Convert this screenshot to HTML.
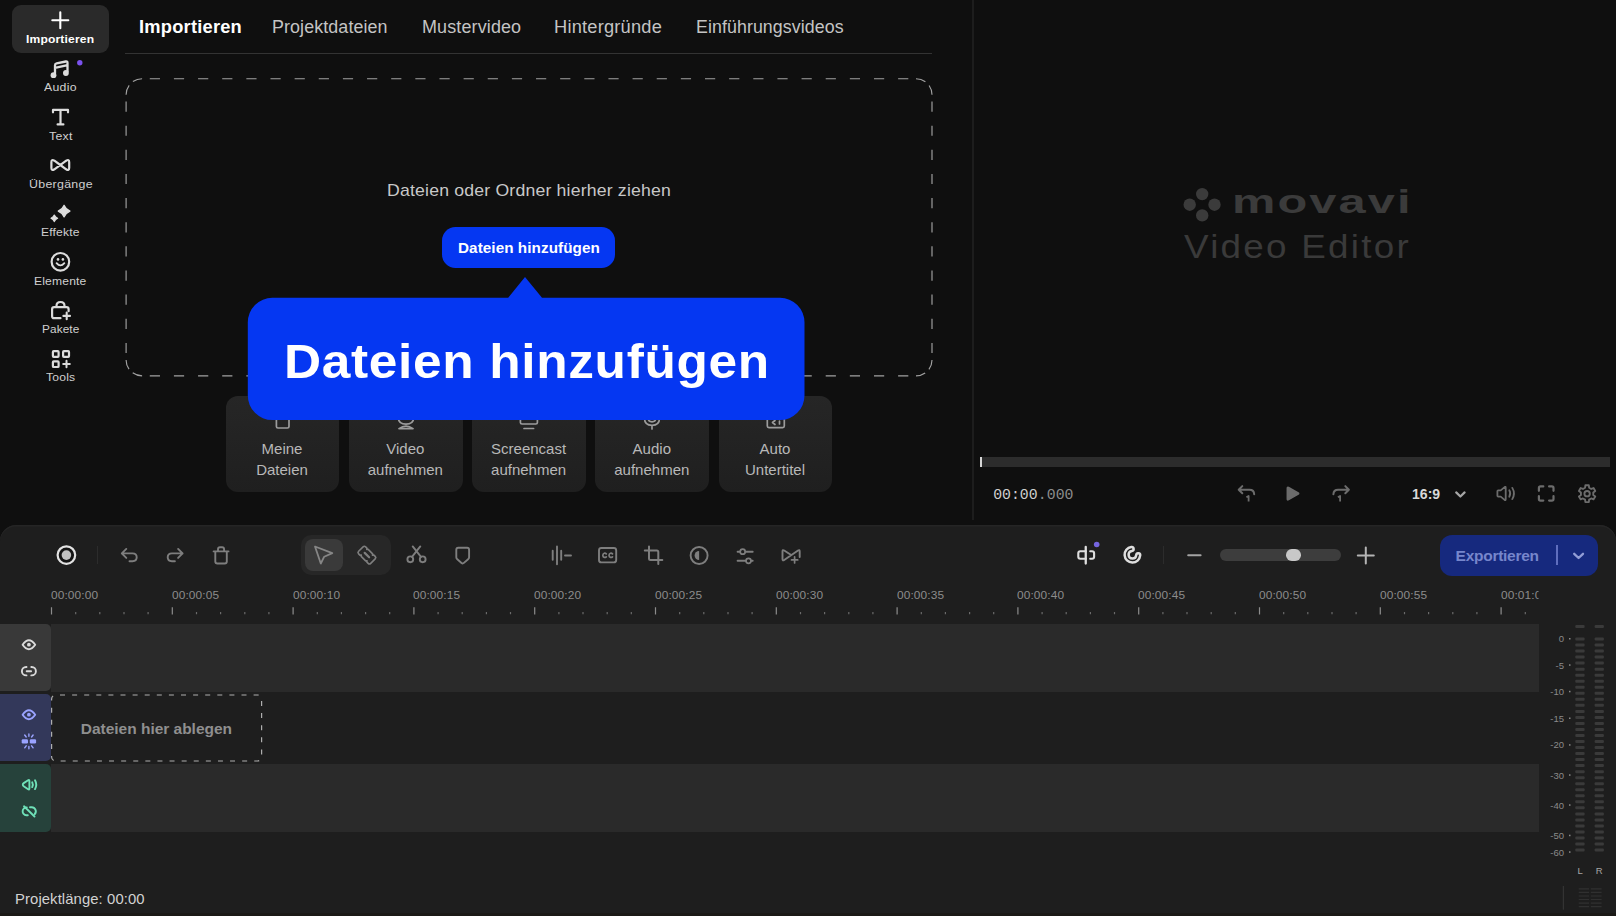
<!DOCTYPE html>
<html lang="de">
<head>
<meta charset="utf-8">
<title>Movavi Video Editor – Dateien hinzufügen</title>
<style>
html,body{margin:0;padding:0;}
body{width:1616px;height:916px;overflow:hidden;background:#0f0f0f;position:relative;font-family:"Liberation Sans",sans-serif;}
.a{position:absolute;}
.t{position:absolute;white-space:pre;}
svg{position:absolute;overflow:visible;}
.card{position:absolute;top:396.2px;height:96.3px;width:113.8px;background:linear-gradient(#262626,#1f1f1f);border-radius:12px;}
.card div{position:absolute;left:0;width:113px;text-align:center;font:400 15px/1 "Liberation Sans",sans-serif;color:#b8b8b8;white-space:pre;}
.vu{position:absolute;font:400 9.5px/1 "Liberation Sans",sans-serif;color:#8a8a8a;text-align:right;width:30px;left:1534px;}
</style>
</head>
<body>
<!-- sidebar -->
<div class="a" style="left:12px;top:4.5px;width:97px;height:48px;background:#2a2a2a;border-radius:9px;"></div>
<svg id="icons-side" width="120" height="400" viewBox="0 0 120 400" style="left:0;top:0" fill="none" stroke="#dcdcdc" stroke-width="2.1" stroke-linecap="round" stroke-linejoin="round">
  <!-- plus -->
  <path d="M52.3 20.3h16M60.3 12.3v16" stroke="#fff" stroke-width="2.1"/>
  <!-- audio note -->
  <path stroke-width="2.3" d="M55 73.5V65.3q0 -1.6 1.6 -1.9l9.2 -1.9q1.7 -.3 1.7 1.4V71.5M55 67.8l12.5 -2.6"/>
  <circle cx="53.5" cy="75.2" r="2.9" fill="#dcdcdc" stroke="none"/><circle cx="65.9" cy="73" r="2.9" fill="#dcdcdc" stroke="none"/>
  <circle cx="79.8" cy="62.7" r="2.7" fill="#7b52ee" stroke="none"/>
  <!-- T -->
  <path d="M53 112.3v-2.4h15v2.4M60.5 110v14.3M57.6 124.4h5.8" stroke-width="2.2"/>
  <!-- transitions bowtie -->
  <path d="M60.3 165L54.4 160.7Q51.4 158.8 51.4 162.2V167.8Q51.4 171.2 54.4 169.3L66.2 160.7Q69.2 158.8 69.2 162.2V167.8Q69.2 171.2 66.2 169.3Z" stroke-width="2.2"/>
  <!-- effects sparkles -->
  <g fill="#dcdcdc" stroke="#dcdcdc" stroke-width="1.2">
    <path d="M64.1 205.2Q65.8 209.4 70 211.1Q65.8 212.8 64.1 217Q62.4 212.8 58.2 211.1Q62.4 209.4 64.1 205.2Z"/>
    <path d="M54.3 215Q55.3 217.3 57.6 218.3Q55.3 219.3 54.3 221.6Q53.3 219.3 51 218.3Q53.3 217.3 54.3 215Z"/>
  </g>
  <!-- elements smiley -->
  <circle cx="60.4" cy="261.8" r="8.8" stroke-width="2.2"/>
  <circle cx="58" cy="259.4" r="1.3" fill="#dcdcdc" stroke="none"/><circle cx="62.9" cy="259.4" r="1.3" fill="#dcdcdc" stroke="none"/>
  <path d="M56.6 263.2q3.8 4.4 7.7 0" stroke-width="1.9"/>
  <!-- packages bag -->
  <path d="M60.5 318.2h-6.4q-2 0 -2 -2v-7q0 -2 2 -2h12.5q2 0 2 2v2" stroke-width="2.2"/>
  <path d="M56.5 306.5v-.6q0 -3.9 4 -3.9t4 3.9v.6" stroke-width="2.2"/>
  <path d="M66.7 312.6v6.6M63.4 315.9h6.6" stroke-width="2.1"/>
  <!-- tools grid -->
  <g stroke-width="2.2">
    <rect x="52.9" y="351.1" width="5.7" height="5.7" rx=".8"/>
    <rect x="63.1" y="351.1" width="5.9" height="5.7" rx=".8"/>
    <rect x="52.9" y="361.4" width="5.7" height="5.6" rx=".8"/>
    <path d="M66.5 360.7v6.6M63.2 364h6.6" stroke-width="2"/>
  </g>
</svg>
<!-- import panel -->
<div class="a" style="left:125px;top:53px;width:807px;height:1px;background:#333333;"></div>
<svg width="1000" height="400" style="left:0;top:0" viewBox="0 0 1000 400"><path d="M511.88 78.7h10.2M511.88 375.9h10.2M536.02 78.7h10.2M536.02 375.9h10.2M487.74 78.7h10.2M487.74 375.9h10.2M560.16 78.7h10.2M560.16 375.9h10.2M463.60 78.7h10.2M463.60 375.9h10.2M584.30 78.7h10.2M584.30 375.9h10.2M439.46 78.7h10.2M439.46 375.9h10.2M608.44 78.7h10.2M608.44 375.9h10.2M415.32 78.7h10.2M415.32 375.9h10.2M632.58 78.7h10.2M632.58 375.9h10.2M391.18 78.7h10.2M391.18 375.9h10.2M656.72 78.7h10.2M656.72 375.9h10.2M367.04 78.7h10.2M367.04 375.9h10.2M680.86 78.7h10.2M680.86 375.9h10.2M342.90 78.7h10.2M342.90 375.9h10.2M705.00 78.7h10.2M705.00 375.9h10.2M318.76 78.7h10.2M318.76 375.9h10.2M729.14 78.7h10.2M729.14 375.9h10.2M294.62 78.7h10.2M294.62 375.9h10.2M753.28 78.7h10.2M753.28 375.9h10.2M270.48 78.7h10.2M270.48 375.9h10.2M777.42 78.7h10.2M777.42 375.9h10.2M246.34 78.7h10.2M246.34 375.9h10.2M801.56 78.7h10.2M801.56 375.9h10.2M222.20 78.7h10.2M222.20 375.9h10.2M825.70 78.7h10.2M825.70 375.9h10.2M198.06 78.7h10.2M198.06 375.9h10.2M849.84 78.7h10.2M849.84 375.9h10.2M173.92 78.7h10.2M173.92 375.9h10.2M873.98 78.7h10.2M873.98 375.9h10.2M149.78 78.7h10.2M149.78 375.9h10.2M898.12 78.7h10.2M898.12 375.9h10.2M126.1 222.20v10.2M932.0 222.20v10.2M126.1 198.06v10.2M932.0 198.06v10.2M126.1 246.34v10.2M932.0 246.34v10.2M126.1 173.92v10.2M932.0 173.92v10.2M126.1 270.48v10.2M932.0 270.48v10.2M126.1 149.78v10.2M932.0 149.78v10.2M126.1 294.62v10.2M932.0 294.62v10.2M126.1 125.64v10.2M932.0 125.64v10.2M126.1 318.76v10.2M932.0 318.76v10.2M126.1 101.50v10.2M932.0 101.50v10.2M126.1 342.90v10.2M932.0 342.90v10.2M126.10 94.70A16.0 16.0 0 0 1 129.16 85.30M132.92 81.59A16.0 16.0 0 0 1 142.10 78.70M916.00 78.70A16.0 16.0 0 0 1 925.40 81.76M929.11 85.52A16.0 16.0 0 0 1 932.00 94.70M932.00 359.90A16.0 16.0 0 0 1 928.94 369.30M925.18 373.01A16.0 16.0 0 0 1 916.00 375.90M142.10 375.90A16.0 16.0 0 0 1 132.70 372.84M128.99 369.08A16.0 16.0 0 0 1 126.10 359.90" fill="none" stroke="#a2a2a2" stroke-width="1.15"/></svg>
<div class="a" style="left:442.2px;top:226.6px;width:172.6px;height:41.2px;border-radius:13.5px;background:#0537f2;"></div>
<!-- quick action cards -->
<div class="card" style="left:225.5px"><div style="top:44.5px">Meine</div><div style="top:65.5px">Dateien</div></div>
<div class="card" style="left:348.8px"><div style="top:44.5px">Video</div><div style="top:65.5px">aufnehmen</div></div>
<div class="card" style="left:472.1px"><div style="top:44.5px">Screencast</div><div style="top:65.5px">aufnehmen</div></div>
<div class="card" style="left:595.3px"><div style="top:44.5px">Audio</div><div style="top:65.5px">aufnehmen</div></div>
<div class="card" style="left:718.5px"><div style="top:44.5px">Auto</div><div style="top:65.5px">Untertitel</div></div>
<svg width="1000" height="440" style="left:0;top:0" viewBox="0 0 1000 440" fill="none" stroke="#9c9c9c" stroke-width="1.7" stroke-linecap="round" stroke-linejoin="round">
  <path d="M276.4 418v8.4q0 1.6 1.6 1.6h9.4q1.6 0 1.6 -1.6V418"/>
  <path d="M398.3 418q.3 6.2 7.7 6.2t7.7 -6.2M399 428.6q7 -5 14 0M399 428.6h14"/>
  <path d="M520.4 418v4.4q0 1.6 1.6 1.6h13.8q1.6 0 1.6 -1.6V418M524 428.5h9.6"/>
  <path d="M644.5 418q0 7.3 7.5 7.3t7.5 -7.3M648.2 418q0 3.8 3.8 3.8t3.8 -3.8M652 425.5v3.5"/>
  <path d="M767.3 418v8q0 1.6 1.6 1.6h13.8q1.6 0 1.6 -1.6V418M775 420.5l-2.5 2l2.5 2M779.5 421v3"/>
</svg>
<!-- tooltip -->
<svg width="1000" height="440" style="left:0;top:0" viewBox="0 0 1000 440">
  <path d="M272.3 297.8H508.2L525 277L542 297.8H780.0a24.5 24.5 0 0 1 24.5 24.5V395.5a24.5 24.5 0 0 1 -24.5 24.5H272.3a24.5 24.5 0 0 1 -24.5 -24.5V322.3a24.5 24.5 0 0 1 24.5 -24.5Z" fill="#0537f2"/>
</svg>
<!-- preview -->
<div class="a" style="left:972.1px;top:0;width:1.9px;height:520px;background:#1d1d1d;"></div>
<svg width="60" height="60" style="left:1170px;top:170px" viewBox="1170 170 60 60" fill="#3b3b3b">
  <circle cx="1202.2" cy="194.1" r="6.2"/><circle cx="1189.7" cy="204.7" r="6.2"/><circle cx="1214.5" cy="204.7" r="6.2"/><circle cx="1202.2" cy="215.4" r="6.2"/>
</svg>
<div class="a" style="left:980.2px;top:457.1px;width:630px;height:10px;background:#2c2c2c;"></div>
<div class="a" style="left:980.2px;top:457.1px;width:1.7px;height:10px;background:#d6d6d6;"></div>
<svg width="1616" height="530" style="left:0;top:0" viewBox="0 0 1616 530" fill="none" stroke="#6c6c6c" stroke-width="2" stroke-linecap="round" stroke-linejoin="round">
  <!-- step back -->
  <path d="M1242.3 486.1L1238.7 489.7L1242.3 493.3M1238.7 489.7H1249.5q4.5 0 4.7 4.5"/>
  <path d="M1246.4 497.3l2.2 -1.3v5.6" stroke-width="1.8" stroke-linecap="butt"/>
  <!-- play -->
  <path d="M1287.3 488.2v10.8q0 1.3 1.2 .7l9.7 -5.5q1 -.6 0 -1.2l-9.7 -5.5q-1.2 -.6 -1.2 .7z" fill="#6c6c6c" stroke-width="1.5"/>
  <!-- step fwd -->
  <path d="M1345.3 486.1L1348.9 489.7L1345.3 493.3M1348.9 489.7H1338.1q-4.5 0 -4.7 4.5"/>
  <path d="M1337.9 497.3l2.2 -1.3v5.6" stroke-width="1.8" stroke-linecap="butt"/>
  <!-- chevron -->
  <path d="M1456.2 492.4l4.2 4.1l4.2 -4.1" stroke="#a6a6a6" stroke-width="2.2"/>
  <!-- volume -->
  <path d="M1497.4 491.2q0 -.8 .8 -.8h2.5l3.9 -3.3q1.1 -.8 1.1 .6v11.6q0 1.4 -1.1 .6l-3.9 -3.3h-2.5q-.8 0 -.8 -.8z" stroke-width="1.8"/>
  <path d="M1509.3 490.3q1.9 3.2 0 6.4M1512.3 487.9q3.3 5.6 0 11.2" stroke-width="1.8"/>
  <!-- fullscreen -->
  <path d="M1538.9 490.8v-2.8q0 -1.6 1.6 -1.6h2.8M1549.1 486.4h2.8q1.6 0 1.6 1.6v2.8M1553.5 496.2v2.8q0 1.6 -1.6 1.6h-2.8M1543.3 500.6h-2.8q-1.6 0 -1.6 -1.6v-2.8" stroke-width="2.2"/>
  <!-- gear -->
  <path d="M1585.06 487.74L1585.39 485.27L1588.81 485.27L1589.14 487.74L1591.24 488.95L1593.55 488.01L1595.25 490.97L1593.28 492.49L1593.28 494.91L1595.25 496.43L1593.55 499.39L1591.24 498.45L1589.14 499.66L1588.81 502.13L1585.39 502.13L1585.06 499.66L1582.96 498.45L1580.65 499.39L1578.95 496.43L1580.92 494.91L1580.92 492.49L1578.95 490.97L1580.65 488.01L1582.96 488.95Z" stroke-width="1.9"/><circle cx="1587.1" cy="493.7" r="2.7" stroke-width="1.9"/>
</svg>
<!-- timeline -->
<div class="a" style="left:0;top:525.3px;width:1616px;height:391px;background:#1e1e1e;border-radius:16px 16px 0 0;box-shadow:inset 0 1.6px 0 #252525;"></div>
<div class="a" style="left:51px;top:624px;width:1488px;height:67.6px;background:#2a2a2a;"></div>
<div class="a" style="left:51px;top:764px;width:1488px;height:67.8px;background:#2a2a2a;"></div>
<div class="a" style="left:0;top:623.9px;width:50.7px;height:66.9px;background:#393939;border-radius:0 5px 5px 0;"></div>
<div class="a" style="left:0;top:693.9px;width:50.7px;height:67.3px;background:#33385a;border-radius:0 5px 5px 0;"></div>
<div class="a" style="left:0;top:763.9px;width:50.7px;height:68px;background:#26423b;border-radius:0 5px 5px 0;"></div>
<svg width="300" height="100" style="left:0;top:680px" viewBox="0 680 300 100"><rect x="51.6" y="695" width="210" height="66" rx="4" fill="none" stroke="#aeaeae" stroke-width="1.2" stroke-dasharray="5 7.1" stroke-dashoffset="-4.4"/></svg>
<svg width="1616" height="20" style="left:0;top:600px" viewBox="0 0 1616 20" stroke="#8c8c8c" stroke-width="1.2"><path d="M51.5 7.2V14.6M172.3 7.2V14.6M293.1 7.2V14.6M413.9 7.2V14.6M534.7 7.2V14.6M655.5 7.2V14.6M776.3 7.2V14.6M897.1 7.2V14.6M1017.9 7.2V14.6M1138.7 7.2V14.6M1259.5 7.2V14.6M1380.3 7.2V14.6M1501.1 7.2V14.6"/><path d="M75.7 12V14.3M99.8 12V14.3M124.0 12V14.3M148.1 12V14.3M196.5 12V14.3M220.6 12V14.3M244.8 12V14.3M268.9 12V14.3M317.3 12V14.3M341.4 12V14.3M365.6 12V14.3M389.7 12V14.3M438.1 12V14.3M462.2 12V14.3M486.4 12V14.3M510.5 12V14.3M558.9 12V14.3M583.0 12V14.3M607.2 12V14.3M631.3 12V14.3M679.7 12V14.3M703.8 12V14.3M728.0 12V14.3M752.1 12V14.3M800.5 12V14.3M824.6 12V14.3M848.8 12V14.3M872.9 12V14.3M921.3 12V14.3M945.4 12V14.3M969.6 12V14.3M993.7 12V14.3M1042.1 12V14.3M1066.2 12V14.3M1090.4 12V14.3M1114.5 12V14.3M1162.9 12V14.3M1187.0 12V14.3M1211.2 12V14.3M1235.3 12V14.3M1283.7 12V14.3M1307.8 12V14.3M1332.0 12V14.3M1356.1 12V14.3M1404.5 12V14.3M1428.6 12V14.3M1452.8 12V14.3M1476.9 12V14.3M1525.3 12V14.3" stroke="#6a6a6a"/></svg>
<div class="vu" style="top:634.2px">0</div>
<div class="vu" style="top:660.5px">-5</div>
<div class="vu" style="top:687.0px">-10</div>
<div class="vu" style="top:713.7px">-15</div>
<div class="vu" style="top:740.4px">-20</div>
<div class="vu" style="top:770.5px">-30</div>
<div class="vu" style="top:800.5px">-40</div>
<div class="vu" style="top:830.9px">-50</div>
<div class="vu" style="top:847.5px">-60</div>
<svg width="60" height="300" style="left:1560px;top:620.2px" viewBox="0 0 60 300" fill="#3a3a3a"><rect x="9" y="18.0" width="1.5" height="1.5" fill="#8a8a8a"/><rect x="9" y="44.3" width="1.5" height="1.5" fill="#8a8a8a"/><rect x="9" y="70.8" width="1.5" height="1.5" fill="#8a8a8a"/><rect x="9" y="97.5" width="1.5" height="1.5" fill="#8a8a8a"/><rect x="9" y="124.2" width="1.5" height="1.5" fill="#8a8a8a"/><rect x="9" y="154.3" width="1.5" height="1.5" fill="#8a8a8a"/><rect x="9" y="184.3" width="1.5" height="1.5" fill="#8a8a8a"/><rect x="9" y="214.7" width="1.5" height="1.5" fill="#8a8a8a"/><rect x="9" y="231.3" width="1.5" height="1.5" fill="#8a8a8a"/><rect x="15.3" y="5" width="9.3" height="3" rx="1"/><rect x="15.3" y="17.5" width="9.3" height="3" rx="1"/><rect x="15.3" y="23.5" width="9.3" height="3" rx="1"/><rect x="15.3" y="29.6" width="9.3" height="3" rx="1"/><rect x="15.3" y="35.6" width="9.3" height="3" rx="1"/><rect x="15.3" y="41.6" width="9.3" height="3" rx="1"/><rect x="15.3" y="47.7" width="9.3" height="3" rx="1"/><rect x="15.3" y="53.7" width="9.3" height="3" rx="1"/><rect x="15.3" y="59.7" width="9.3" height="3" rx="1"/><rect x="15.3" y="65.7" width="9.3" height="3" rx="1"/><rect x="15.3" y="71.8" width="9.3" height="3" rx="1"/><rect x="15.3" y="77.8" width="9.3" height="3" rx="1"/><rect x="15.3" y="83.8" width="9.3" height="3" rx="1"/><rect x="15.3" y="89.9" width="9.3" height="3" rx="1"/><rect x="15.3" y="95.9" width="9.3" height="3" rx="1"/><rect x="15.3" y="101.9" width="9.3" height="3" rx="1"/><rect x="15.3" y="108.0" width="9.3" height="3" rx="1"/><rect x="15.3" y="114.0" width="9.3" height="3" rx="1"/><rect x="15.3" y="120.0" width="9.3" height="3" rx="1"/><rect x="15.3" y="126.0" width="9.3" height="3" rx="1"/><rect x="15.3" y="132.1" width="9.3" height="3" rx="1"/><rect x="15.3" y="138.1" width="9.3" height="3" rx="1"/><rect x="15.3" y="144.1" width="9.3" height="3" rx="1"/><rect x="15.3" y="150.2" width="9.3" height="3" rx="1"/><rect x="15.3" y="156.2" width="9.3" height="3" rx="1"/><rect x="15.3" y="162.2" width="9.3" height="3" rx="1"/><rect x="15.3" y="168.2" width="9.3" height="3" rx="1"/><rect x="15.3" y="174.3" width="9.3" height="3" rx="1"/><rect x="15.3" y="180.3" width="9.3" height="3" rx="1"/><rect x="15.3" y="186.3" width="9.3" height="3" rx="1"/><rect x="15.3" y="192.4" width="9.3" height="3" rx="1"/><rect x="15.3" y="198.4" width="9.3" height="3" rx="1"/><rect x="15.3" y="204.4" width="9.3" height="3" rx="1"/><rect x="15.3" y="210.5" width="9.3" height="3" rx="1"/><rect x="15.3" y="216.5" width="9.3" height="3" rx="1"/><rect x="15.3" y="222.5" width="9.3" height="3" rx="1"/><rect x="15.3" y="228.6" width="9.3" height="3" rx="1"/><rect x="34.6" y="5" width="9.3" height="3" rx="1"/><rect x="34.6" y="17.5" width="9.3" height="3" rx="1"/><rect x="34.6" y="23.5" width="9.3" height="3" rx="1"/><rect x="34.6" y="29.6" width="9.3" height="3" rx="1"/><rect x="34.6" y="35.6" width="9.3" height="3" rx="1"/><rect x="34.6" y="41.6" width="9.3" height="3" rx="1"/><rect x="34.6" y="47.7" width="9.3" height="3" rx="1"/><rect x="34.6" y="53.7" width="9.3" height="3" rx="1"/><rect x="34.6" y="59.7" width="9.3" height="3" rx="1"/><rect x="34.6" y="65.7" width="9.3" height="3" rx="1"/><rect x="34.6" y="71.8" width="9.3" height="3" rx="1"/><rect x="34.6" y="77.8" width="9.3" height="3" rx="1"/><rect x="34.6" y="83.8" width="9.3" height="3" rx="1"/><rect x="34.6" y="89.9" width="9.3" height="3" rx="1"/><rect x="34.6" y="95.9" width="9.3" height="3" rx="1"/><rect x="34.6" y="101.9" width="9.3" height="3" rx="1"/><rect x="34.6" y="108.0" width="9.3" height="3" rx="1"/><rect x="34.6" y="114.0" width="9.3" height="3" rx="1"/><rect x="34.6" y="120.0" width="9.3" height="3" rx="1"/><rect x="34.6" y="126.0" width="9.3" height="3" rx="1"/><rect x="34.6" y="132.1" width="9.3" height="3" rx="1"/><rect x="34.6" y="138.1" width="9.3" height="3" rx="1"/><rect x="34.6" y="144.1" width="9.3" height="3" rx="1"/><rect x="34.6" y="150.2" width="9.3" height="3" rx="1"/><rect x="34.6" y="156.2" width="9.3" height="3" rx="1"/><rect x="34.6" y="162.2" width="9.3" height="3" rx="1"/><rect x="34.6" y="168.2" width="9.3" height="3" rx="1"/><rect x="34.6" y="174.3" width="9.3" height="3" rx="1"/><rect x="34.6" y="180.3" width="9.3" height="3" rx="1"/><rect x="34.6" y="186.3" width="9.3" height="3" rx="1"/><rect x="34.6" y="192.4" width="9.3" height="3" rx="1"/><rect x="34.6" y="198.4" width="9.3" height="3" rx="1"/><rect x="34.6" y="204.4" width="9.3" height="3" rx="1"/><rect x="34.6" y="210.5" width="9.3" height="3" rx="1"/><rect x="34.6" y="216.5" width="9.3" height="3" rx="1"/><rect x="34.6" y="222.5" width="9.3" height="3" rx="1"/><rect x="34.6" y="228.6" width="9.3" height="3" rx="1"/></svg>
<div class="a" style="left:1574.2px;top:866px;width:12px;text-align:center;font:400 9.5px/1 'Liberation Sans',sans-serif;color:#a6a6a6;">L</div>
<div class="a" style="left:1593.2px;top:866px;width:12px;text-align:center;font:400 9.5px/1 'Liberation Sans',sans-serif;color:#a6a6a6;">R</div>
<svg width="60" height="36" style="left:1556px;top:880px" viewBox="1556 880 60 36" stroke="#303030" stroke-width="1.2"><path d="M1563.4 886V909.7" stroke="#333333" stroke-width="1.3"/><path d="M1578.7 888.8H1589.1M1590.8 888.8H1601.6"/><path d="M1578.7 892.4H1589.1M1590.8 892.4H1601.6"/><path d="M1578.7 896.0H1589.1M1590.8 896.0H1601.6"/><path d="M1578.7 899.5H1589.1M1590.8 899.5H1601.6"/><path d="M1578.7 903.1H1589.1M1590.8 903.1H1601.6"/><path d="M1578.7 906.7H1589.1M1590.8 906.7H1601.6"/></svg>
<div class="a" style="left:0;top:913.4px;width:1616px;height:3px;background:#1b1916;"></div>
<!-- toolbar -->
<div class="a" style="left:301px;top:535.2px;width:89.7px;height:40.3px;background:#272727;border-radius:10px;"></div>
<div class="a" style="left:304.6px;top:539.4px;width:38.4px;height:31.6px;background:#3a3a3a;border-radius:8px;"></div>
<div class="a" style="left:97.2px;top:545.5px;width:1.3px;height:18.5px;background:#2c2c2c;"></div>
<div class="a" style="left:1162.6px;top:545.5px;width:1.3px;height:18.5px;background:#2c2c2c;"></div>
<div class="a" style="left:1220px;top:549.4px;width:120.9px;height:11.7px;background:#3d3d3d;border-radius:6px;"></div>
<div class="a" style="left:1286.2px;top:549.4px;width:14.7px;height:11.7px;background:#c8c8c8;border-radius:5.8px;"></div>
<div class="a" style="left:1440px;top:534.6px;width:158.4px;height:41px;background:#16297e;border-radius:12px;"></div>
<div class="a" style="left:1556px;top:545.1px;width:1.8px;height:20px;background:#5f6ebe;"></div>
<svg id="icons-tl" width="1616" height="60" style="left:0;top:525px" viewBox="0 525 1616 60" fill="none" stroke="#7e7e7e" stroke-width="1.9" stroke-linecap="round" stroke-linejoin="round">
  <!-- record -->
  <circle cx="66.4" cy="555.1" r="8.8" stroke="#e2e2e2" stroke-width="2.2" fill="#141414"/><circle cx="66.4" cy="555.1" r="4.8" fill="#c2c2c2" stroke="none"/>
  <!-- undo -->
  <path d="M126.3 548.9L121.8 553.4L126.3 557.9M121.8 553.4H132.5q4.2 0 4.2 3.9t-4.2 3.9H129.5"/>
  <!-- redo -->
  <path d="M178.1 548.9L182.6 553.4L178.1 557.9M182.6 553.4H171.9q-4.2 0 -4.2 3.9t4.2 3.9H174.9"/>
  <!-- trash -->
  <path d="M213.6 551.4h14.9M218 551.4v-2.2q0 -2 2 -2h2.1q2 0 2 2v2.2M215.3 551.4v10q0 2.1 2.1 2.1h7.3q2.1 0 2.1 -2.1v-10"/>
  <!-- pointer -->
  <path d="M315 546.5L332.3 553.1L324.2 556.7L320.8 563.5Z" stroke="#868686" stroke-width="1.8"/>
  <!-- blade -->
  <g transform="translate(366.9,555.1) rotate(45) scale(0.9)"><path d="M-9.5 -3.5q0 -2 2 -2h2l1 1.2l1 -1.2h7l1 1.2l1 -1.2h2q2 0 2 2v7q0 2 -2 2h-2l-1 -1.2l-1 1.2h-7l-1 -1.2l-1 1.2h-2q-2 0 -2 -2z" stroke-width="1.8"/><path d="M-3.5 0h7" stroke-width="2.4"/></g>
  <!-- scissors -->
  <circle cx="410.3" cy="559.3" r="2.9"/><circle cx="422.7" cy="559.3" r="2.9"/><path d="M412 556.8L420.3 546.4M421 556.8L412.7 546.4"/>
  <!-- marker -->
  <path d="M458.3 547.8h8.8q2 0 2 2v7.5q0 1.2 -1 2l-4.2 3.6q-1.2 1 -2.4 0l-4.2 -3.6q-1 -.8 -1 -2v-7.5q0 -2 2 -2z"/>
  <!-- waveform -->
  <path d="M552.7 550.7v9M557 546.5v17.8M561.2 550.7v9M565 555.5h6" stroke-width="1.9"/>
  <!-- CC -->
  <rect x="599" y="548" width="17.2" height="14.4" rx="2.4"/>
  <path d="M606.3 553.8q-.9 -.9 -2.1 -.6t-1.4 2.1q0 1.8 1.4 2.1q1.2 .3 2.1 -.6M612.5 553.8q-.9 -.9 -2.1 -.6t-1.4 2.1q0 1.8 1.4 2.1q1.2 .3 2.1 -.6" stroke-width="1.7"/>
  <!-- crop -->
  <path d="M649 546.5V558.5q0 1.5 1.5 1.5H662.3M644.8 550.5H656.8q1.5 0 1.5 1.5V564" stroke-width="2"/>
  <!-- contrast -->
  <circle cx="699.1" cy="555.5" r="8.5"/><path d="M699.1 551a4.5 4.5 0 0 0 0 9z" fill="#7e7e7e" stroke="none"/>
  <!-- sliders -->
  <path d="M737.6 551.7h2.4M745.5 551.7h7.2M737.6 560.8h8.2M751.3 560.8h1.4" /><circle cx="742.7" cy="551.7" r="2.5" stroke-width="1.7"/><circle cx="748.5" cy="560.8" r="2.5" stroke-width="1.7"/>
  <!-- transition plus -->
  <path d="M799.7 557V551.4q0 -2 -1.7 -.9L784.2 560q-1.7 1.1 -1.7 -.9V551.4q0 -2 1.7 -.9L791.2 555" stroke-width="1.9"/><path d="M794.6 556.8v6.2M791.5 559.9h6.2" stroke-width="1.7"/>
  <!-- audio split -->
  <g stroke="#dedede" stroke-width="2.1"><path d="M1085.750000 547v16.5" stroke-width="2.3"/><path d="M1085.7 551.2h-5.4q-2 0 -2 2v3.6q0 2 2 2h5.4M1090.2 551.2h1.9q2 0 2 2v3.6q0 2 -2 2h-1.9"/></g>
  <circle cx="1096.7" cy="544.5" r="2.8" fill="#7565e0" stroke="none"/>
  <!-- magnet -->
  <path d="M1131.6 549A5.8 5.8 0 1 0 1138.2 555.3" stroke="#dedede" stroke-width="6.5"/>
  <path d="M1131.6 549A5.8 5.8 0 1 0 1138.2 555.3" stroke="#1e1e1e" stroke-width="1.5"/>
  <!-- minus -->
  <path d="M1188.2 555.3h12.4" stroke="#a4a4a4" stroke-width="2"/>
  <!-- plus -->
  <path d="M1357.8 555.5h16M1365.8 547.5v16" stroke="#b4b4b4" stroke-width="2"/>
  <!-- export chevron -->
  <path d="M1574.2 553.8l4.4 4.2l4.4 -4.2" stroke="#929dd6" stroke-width="2.3"/>
</svg>
<!-- track header icons -->
<svg id="icons-trk" width="60" height="220" style="left:0;top:620px" viewBox="0 620 60 220" fill="none" stroke-width="1.9" stroke-linecap="round" stroke-linejoin="round">
  <g stroke="#dadada">
    <g transform="translate(28.9,644.7)"><path d="M-6.3 0q6.3 -9 12.6 0q-6.3 9 -12.6 0z" stroke-width="1.9"/><circle r="1.9" fill="#dadada" stroke="none"/></g>
    <path d="M26.5 667h-.4a4.2 4.2 0 0 0 0 8.4h.4M31.3 667h.4a4.2 4.2 0 0 1 0 8.4h-.4M26.7 671.2h4.4"/>
  </g>
  <g stroke="#9aa3ff">
    <g transform="translate(28.9,714.7)"><path d="M-6.3 0q6.3 -9 12.6 0q-6.3 9 -12.6 0z" stroke-width="1.9"/><circle r="1.9" fill="#9aa3ff" stroke="none"/></g>
    <rect x="21.7" y="739.2" width="6.3" height="4.3" rx="1.2" fill="#9aa3ff" stroke="none"/><rect x="29.8" y="739.2" width="6.3" height="4.3" rx="1.2" fill="#9aa3ff" stroke="none"/>
    <path d="M28.9 734v2.3M28.9 746.5v2.3M24.7 735l1.5 2M33.1 735l-1.5 2M24.7 747.8l1.5 -2M33.1 747.8l-1.5 -2" stroke-width="1.4"/>
  </g>
  <g stroke="#6fe0b8">
    <path d="M22.8 784.7q0 -1 .9 -1.6l4.4 -2.9q1.3 -.8 1.3 .8v7.4q0 1.6 -1.3 .8l-4.4 -2.9q-.9 -.6 -.9 -1.6z"/>
    <path d="M32.2 782.3q1.3 2.4 0 4.8M35 780.3q2.5 4.4 0 8.8"/>
    <path d="M26.8 807.5a3.9 3.9 0 0 0 -.5 7.8h1.5M30 807.2h1.6a4.1 4.1 0 0 1 3.2 6.8M24 806.3L34.5 816.5"/>
  </g>
</svg>

<!-- text -->
<span class="t" style="left:26.2px;top:34px;font:700 11.5px/1 'Liberation Sans',sans-serif;letter-spacing:0.16px;color:#ffffff;transform:scaleX(1.0497);transform-origin:0 0;">Importieren</span>
<span class="t" style="left:44.0px;top:82px;font:400 11.5px/1 'Liberation Sans',sans-serif;letter-spacing:0.25px;color:#cfcfcf;transform:scaleX(1.0680);transform-origin:0 0;">Audio</span>
<span class="t" style="left:49.0px;top:131px;font:400 11.5px/1 'Liberation Sans',sans-serif;letter-spacing:0.26px;color:#cfcfcf;transform:scaleX(1.0741);transform-origin:0 0;">Text</span>
<span class="t" style="left:28.5px;top:179px;font:400 11.5px/1 'Liberation Sans',sans-serif;letter-spacing:0.27px;color:#cfcfcf;transform:scaleX(1.0753);transform-origin:0 0;">Übergänge</span>
<span class="t" style="left:41.3px;top:227px;font:400 11.5px/1 'Liberation Sans',sans-serif;letter-spacing:0.16px;color:#cfcfcf;transform:scaleX(1.0531);transform-origin:0 0;">Effekte</span>
<span class="t" style="left:34.4px;top:276px;font:400 11.5px/1 'Liberation Sans',sans-serif;letter-spacing:0.18px;color:#cfcfcf;transform:scaleX(1.0496);transform-origin:0 0;">Elemente</span>
<span class="t" style="left:41.7px;top:324px;font:400 11.5px/1 'Liberation Sans',sans-serif;letter-spacing:0.10px;color:#cfcfcf;transform:scaleX(1.0270);transform-origin:0 0;">Pakete</span>
<span class="t" style="left:45.9px;top:372px;font:400 11.5px/1 'Liberation Sans',sans-serif;letter-spacing:0.19px;color:#cfcfcf;transform:scaleX(1.0542);transform-origin:0 0;">Tools</span>
<span class="t" style="left:138.8px;top:19px;font:700 17.5px/1 'Liberation Sans',sans-serif;letter-spacing:0.22px;color:#ffffff;transform:scaleX(1.0437);transform-origin:0 0;">Importieren</span>
<span class="t" style="left:272.0px;top:19px;font:400 17.5px/1 'Liberation Sans',sans-serif;letter-spacing:0.10px;color:#c4c4c4;transform:scaleX(1.0210);transform-origin:0 0;">Projektdateien</span>
<span class="t" style="left:421.6px;top:19px;font:400 17.5px/1 'Liberation Sans',sans-serif;letter-spacing:0.13px;color:#c4c4c4;transform:scaleX(1.0257);transform-origin:0 0;">Mustervideo</span>
<span class="t" style="left:554.2px;top:19px;font:400 17.5px/1 'Liberation Sans',sans-serif;letter-spacing:0.20px;color:#c4c4c4;transform:scaleX(1.0426);transform-origin:0 0;">Hintergründe</span>
<span class="t" style="left:695.5px;top:19px;font:400 17.5px/1 'Liberation Sans',sans-serif;letter-spacing:0.08px;color:#c4c4c4;transform:scaleX(1.0159);transform-origin:0 0;">Einführungsvideos</span>
<span class="t" style="left:387.4px;top:182px;font:400 17px/1 'Liberation Sans',sans-serif;letter-spacing:0.17px;color:#c8c8c8;transform:scaleX(1.0395);transform-origin:0 0;">Dateien oder Ordner hierher ziehen</span>
<span class="t" style="left:457.6px;top:240px;font:700 15px/1 'Liberation Sans',sans-serif;letter-spacing:0.07px;color:#ffffff;transform:scaleX(1.0162);transform-origin:0 0;">Dateien hinzufügen</span>
<span class="t" style="left:283.8px;top:338px;font:700 48px/1 'Liberation Sans',sans-serif;letter-spacing:0.63px;color:#ffffff;transform:scaleX(1.0700);transform-origin:0 0;">Dateien hinzufügen</span>
<span class="t" style="left:993.2px;top:488px;font:400 14.8px/1 'Liberation Mono',monospace;letter-spacing:-0.00px;color:#cfcfcf;">00:00</span>
<span class="t" style="left:1037.8px;top:488px;font:400 14.8px/1 'Liberation Mono',monospace;letter-spacing:0.06px;color:#8c8c8c;">.000</span>
<span class="t" style="left:1412.3px;top:487px;font:700 14px/1 'Liberation Sans',sans-serif;letter-spacing:0.02px;color:#d8d8d8;transform:scaleX(1.0039);transform-origin:0 0;">16:9</span>
<span class="t" style="left:1231.5px;top:186px;font:700 32.5px/1 'Liberation Sans',sans-serif;letter-spacing:1.40px;color:#3b3b3b;transform:scaleX(1.5000);transform-origin:0 0;">movavi</span>
<span class="t" style="left:1184.0px;top:230px;font:400 33.5px/1 'Liberation Sans',sans-serif;letter-spacing:2.03px;color:#3a3a3a;transform:scaleX(1.1000);transform-origin:0 0;">Video Editor</span>
<span class="t" style="left:1455.6px;top:548px;font:700 15.5px/1 'Liberation Sans',sans-serif;letter-spacing:-0.27px;color:#7686cc;">Exportieren</span>
<span class="t" style="left:80.8px;top:721px;font:700 15.5px/1 'Liberation Sans',sans-serif;letter-spacing:-0.02px;color:#8f8f8f;">Dateien hier ablegen</span>
<span class="t" style="left:14.5px;top:892px;font:400 14.5px/1 'Liberation Sans',sans-serif;letter-spacing:0.09px;color:#d2d2d2;transform:scaleX(1.0237);transform-origin:0 0;">Projektlänge: 00:00</span>
<span class="t" style="left:51.0px;top:590px;font:400 11.5px/1 'Liberation Sans',sans-serif;letter-spacing:0.11px;color:#8c8c8c;transform:scaleX(1.0324);transform-origin:0 0;">00:00:00</span>
<span class="t" style="left:171.8px;top:590px;font:400 11.5px/1 'Liberation Sans',sans-serif;letter-spacing:0.11px;color:#8c8c8c;transform:scaleX(1.0324);transform-origin:0 0;">00:00:05</span>
<span class="t" style="left:292.6px;top:590px;font:400 11.5px/1 'Liberation Sans',sans-serif;letter-spacing:0.11px;color:#8c8c8c;transform:scaleX(1.0324);transform-origin:0 0;">00:00:10</span>
<span class="t" style="left:413.4px;top:590px;font:400 11.5px/1 'Liberation Sans',sans-serif;letter-spacing:0.11px;color:#8c8c8c;transform:scaleX(1.0324);transform-origin:0 0;">00:00:15</span>
<span class="t" style="left:534.2px;top:590px;font:400 11.5px/1 'Liberation Sans',sans-serif;letter-spacing:0.11px;color:#8c8c8c;transform:scaleX(1.0324);transform-origin:0 0;">00:00:20</span>
<span class="t" style="left:655.0px;top:590px;font:400 11.5px/1 'Liberation Sans',sans-serif;letter-spacing:0.11px;color:#8c8c8c;transform:scaleX(1.0324);transform-origin:0 0;">00:00:25</span>
<span class="t" style="left:775.8px;top:590px;font:400 11.5px/1 'Liberation Sans',sans-serif;letter-spacing:0.11px;color:#8c8c8c;transform:scaleX(1.0324);transform-origin:0 0;">00:00:30</span>
<span class="t" style="left:896.6px;top:590px;font:400 11.5px/1 'Liberation Sans',sans-serif;letter-spacing:0.11px;color:#8c8c8c;transform:scaleX(1.0324);transform-origin:0 0;">00:00:35</span>
<span class="t" style="left:1017.4px;top:590px;font:400 11.5px/1 'Liberation Sans',sans-serif;letter-spacing:0.11px;color:#8c8c8c;transform:scaleX(1.0324);transform-origin:0 0;">00:00:40</span>
<span class="t" style="left:1138.2px;top:590px;font:400 11.5px/1 'Liberation Sans',sans-serif;letter-spacing:0.11px;color:#8c8c8c;transform:scaleX(1.0324);transform-origin:0 0;">00:00:45</span>
<span class="t" style="left:1259.0px;top:590px;font:400 11.5px/1 'Liberation Sans',sans-serif;letter-spacing:0.11px;color:#8c8c8c;transform:scaleX(1.0324);transform-origin:0 0;">00:00:50</span>
<span class="t" style="left:1379.8px;top:590px;font:400 11.5px/1 'Liberation Sans',sans-serif;letter-spacing:0.11px;color:#8c8c8c;transform:scaleX(1.0324);transform-origin:0 0;">00:00:55</span>
<span class="t" style="left:1500.6px;top:590px;font:400 11.5px/1 'Liberation Sans',sans-serif;letter-spacing:0.11px;color:#8c8c8c;transform:scaleX(1.0324);transform-origin:0 0;clip-path:inset(0 9.3px 0 0);">00:01:00</span>
</body>
</html>
